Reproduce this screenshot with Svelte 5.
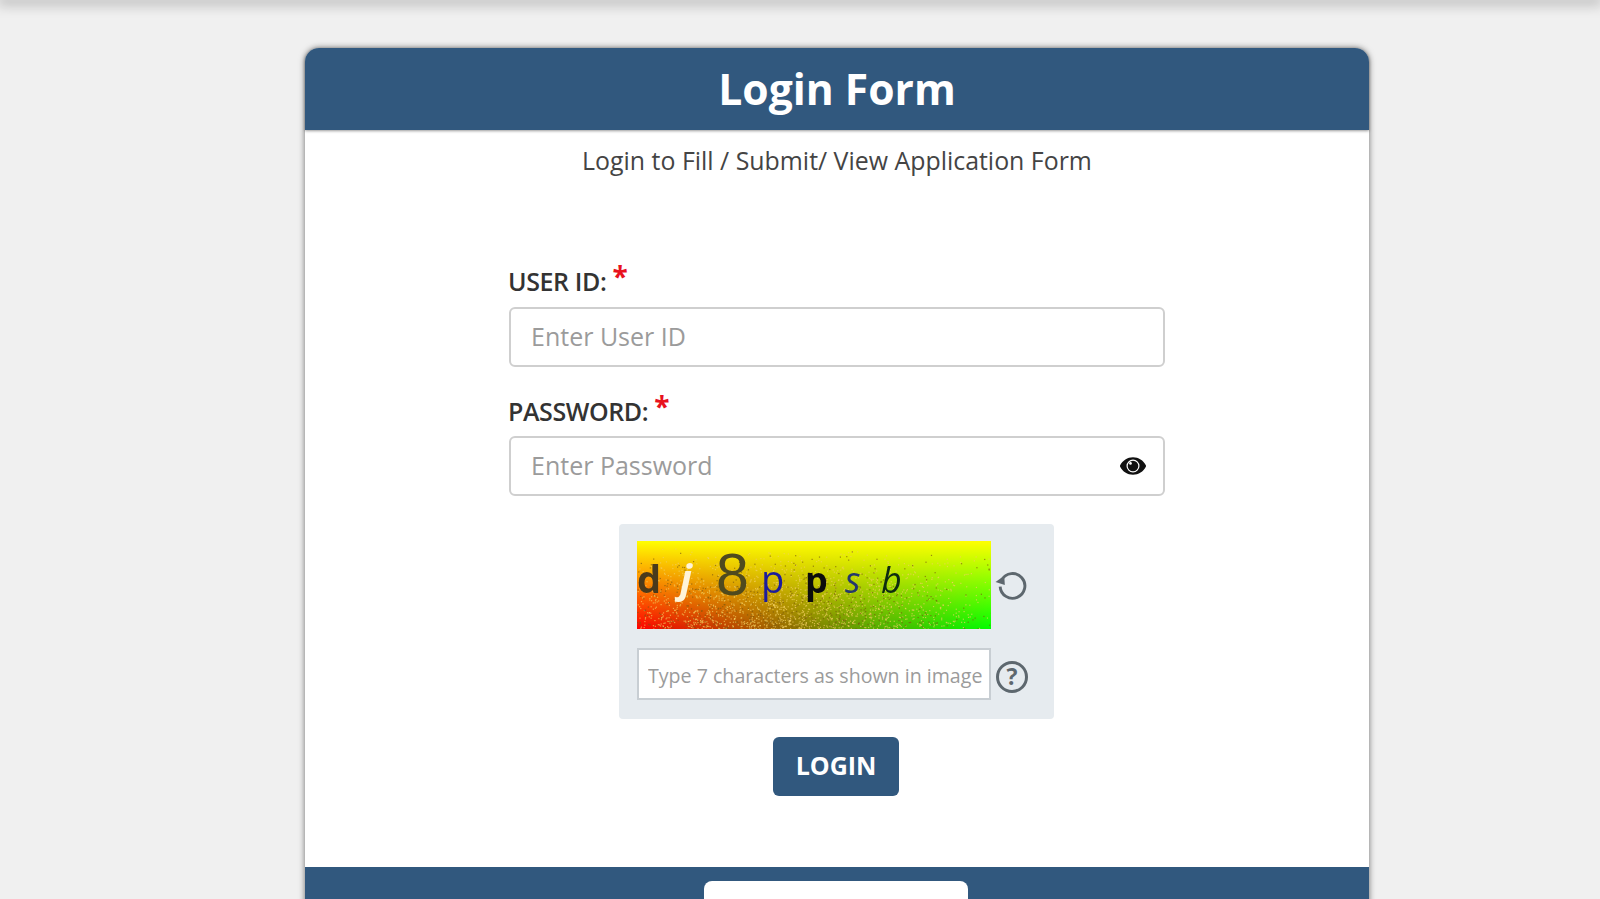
<script>
  // seeded speckle for the captcha picture, denser towards the lower middle
  let seed = 7;
  function rnd() {
    seed = (seed * 16807) % 2147483647;
    return seed / 2147483647;
  }

  const specks = [];
  for (let i = 0; i < 7000; i++) {
    const x = rnd() * 354;
    const y = rnd() * 88;
    const keep = ((y - 8) / 80) * (1 - Math.abs(x - 140) / 240);
    if (rnd() < keep + 0.02) {
      const dark = rnd() < 0.25;
      specks.push({ x, y, fill: dark ? "#7a5a10" : "#f2d060" });
    }
  }
</script>

<div class="topbar"></div>

<main class="page">
  <section class="card">
    <header class="head">
      <h1>Login Form</h1>
    </header>
    <p class="sub">Login to Fill / Submit/ View Application Form</p>

    <form class="form" onsubmit={(e) => e.preventDefault()}>
      <label class="label" for="uid">USER ID: <span class="req">*</span></label>
      <input id="uid" class="field" type="text" placeholder="Enter User ID" />

      <label class="label second" for="pwd">PASSWORD: <span class="req">*</span></label>
      <div class="pwd">
        <input id="pwd" class="field" type="password" placeholder="Enter Password" />
        <svg class="eye" viewBox="0 0 576 512" aria-hidden="true">
          <path
            fill="#111"
            d="M572.52 241.4C518.29 135.59 410.93 64 288 64S57.68 135.64 3.48 241.41a32.35 32.35 0 0 0 0 29.19C57.71 376.41 165.07 448 288 448s230.32-71.64 284.52-177.41a32.35 32.35 0 0 0 0-29.19zM288 400a144 144 0 1 1 144-144 143.93 143.93 0 0 1-144 144z"
          />
          <circle cx="288" cy="256" r="118" fill="#111" />
          <circle cx="232" cy="200" r="30" fill="#fff" />
        </svg>
      </div>

      <div class="captcha">
        <div class="row">
          <svg class="pic" viewBox="0 0 354 88" aria-label="captcha">
            <defs>
              <linearGradient id="across">
                <stop offset="0" stop-color="#ff0000" />
                <stop offset="1" stop-color="#00ff00" />
              </linearGradient>
              <linearGradient id="down" x1="0" y1="0" x2="0" y2="1">
                <stop offset="0" stop-color="#ffff00" />
                <stop offset="1" stop-color="#ffff00" stop-opacity="0" />
              </linearGradient>
            </defs>
            <rect width="354" height="88" fill="url(#across)" />
            <rect width="354" height="88" fill="url(#down)" />
            {#each specks as s}
              <rect x={s.x} y={s.y} width="1.2" height="1.2" fill={s.fill} opacity="0.7" />
            {/each}
            <text x="0" y="52" class="c bold" fill="#4a3a1c" font-size="38">d</text>
            <text x="43" y="52" class="c ital bold" fill="#fff4d8" font-size="40">j</text>
            <text x="79" y="54" class="eight" fill="#4f4a1e" font-size="59">8</text>
            <text x="124" y="52" class="c" fill="#1c1c9c" font-size="38">p</text>
            <text x="168" y="52" class="c bold" fill="#0c0c0c" font-size="36">p</text>
            <text x="208" y="52" class="c ital" fill="#24386c" font-size="36">s</text>
            <text x="244" y="52" class="c ital" fill="#0e2c10" font-size="36">b</text>
          </svg>
          <svg class="tool" viewBox="0 0 32 32" aria-hidden="true">
            <path d="M6.5 12.5A12 12 0 1 1 5 19" fill="none" stroke="#5d676e" stroke-width="2.8" />
            <path d="M0.5 14.5 L9 8.5 L9.5 17.5 Z" fill="#5d676e" />
          </svg>
        </div>
        <div class="row entry">
          <input class="code" type="text" placeholder="Type 7 characters as shown in image" />
          <div class="help">?</div>
        </div>
      </div>

      <button class="login" type="submit">LOGIN</button>
    </form>

    <footer class="foot">
      <div class="foot-btn"></div>
    </footer>
  </section>
</main>

<style>
  :global(body) {
    margin: 0;
    background: #f0f0f0;
    font-family: "Open Sans", "Liberation Sans", sans-serif;
    overflow: hidden;
  }

  .topbar {
    height: 0;
    box-shadow: 0 0 14px 3px rgba(0, 0, 0, 0.38);
  }

  .page {
    height: 899px;
    padding-top: 48px;
    padding-left: 305px;
    box-sizing: border-box;
    overflow: hidden;
  }

  .card {
    width: 1064px;
    background: #fff;
    border-radius: 14px 14px 0 0;
    box-shadow: 0 0 6px rgba(0, 0, 0, 0.55);
  }

  .head {
    height: 82px;
    padding-bottom: 2px;
    box-sizing: border-box;
    background: #31587e;
    border-radius: 14px 14px 0 0;
    box-shadow: 0 1px 3px rgba(0, 0, 0, 0.4);
    display: flex;
    align-items: center;
    justify-content: center;
  }

  h1 {
    margin: 0;
    color: #fff;
    font-size: 42.6px;
    font-weight: 700;
  }

  .sub {
    margin: 0;
    padding-top: 13px;
    height: 103px;
    box-sizing: border-box;
    text-align: center;
    color: #444;
    font-size: 24.9px;
    line-height: 34px;
  }

  .form {
    width: 656px;
    margin: 0 auto;
    padding-top: 30px;
    display: flex;
    flex-direction: column;
  }

  .label {
    height: 44px;
    margin-left: -1px;
    color: #333;
    font-size: 25px;
    font-weight: 600;
    line-height: 36px;
    letter-spacing: -0.4px;
  }

  .second {
    margin-top: 25px;
    line-height: 38px;
  }

  .req {
    color: #e8121e;
    font-size: 28px;
    font-weight: 700;
    vertical-align: 4px;
    line-height: 0;
  }

  .field {
    width: 100%;
    height: 60px;
    box-sizing: border-box;
    padding: 0 20px 2px;
    border: 2px solid #cfcfcf;
    border-radius: 6px;
    background: #fff;
    color: #333;
    font-family: inherit;
    font-size: 25px;
    outline: none;
  }

  .field::placeholder,
  .code::placeholder {
    color: #9b9b9b;
    opacity: 1;
  }

  .pwd {
    position: relative;
  }

  .eye {
    position: absolute;
    right: 19px;
    top: 17px;
    width: 26px;
    height: 26px;
  }

  .captcha {
    width: 435px;
    height: 195px;
    box-sizing: border-box;
    margin: 28px 0 0 110px;
    padding: 17px 18px;
    border-radius: 4px;
    background: #e6ebef;
    display: flex;
    flex-direction: column;
    gap: 19px;
  }

  .row {
    display: flex;
    align-items: center;
    gap: 4px;
  }

  .pic {
    width: 354px;
    height: 88px;
    display: block;
    filter: blur(0.5px);
  }

  .c {
    font-family: "Open Sans", sans-serif;
  }

  .eight {
    font-family: "Liberation Sans", sans-serif;
  }

  .bold {
    font-weight: 700;
  }

  .ital {
    font-style: italic;
  }

  .tool {
    width: 33px;
    height: 33px;
    margin-bottom: 4px;
  }

  .code {
    width: 354px;
    height: 52px;
    box-sizing: border-box;
    padding: 2px 4px 0 9px;
    border: 2px solid #c8ced3;
    background: #fff;
    font-family: inherit;
    font-size: 19.6px;
    outline: none;
  }

  .help {
    width: 32px;
    height: 32px;
    margin: 6px 0 0 1px;
    box-sizing: border-box;
    border: 3.5px solid #5d676e;
    border-radius: 50%;
    color: #5d676e;
    font-size: 23px;
    font-weight: 700;
    line-height: 25px;
    text-align: center;
  }

  .login {
    width: 126px;
    height: 59px;
    margin: 18px 0 0 264px;
    padding: 0 0 3px;
    border: 0;
    border-radius: 6px;
    background: #31587e;
    color: #fff;
    font-family: inherit;
    font-size: 25px;
    font-weight: 700;
  }

  .foot {
    height: 60px;
    margin-top: 71px;
    padding: 14px 0 0 399px;
    box-sizing: border-box;
    background: #31587e;
  }

  .foot-btn {
    width: 264px;
    height: 60px;
    border-radius: 8px;
    background: #fff;
  }
</style>
